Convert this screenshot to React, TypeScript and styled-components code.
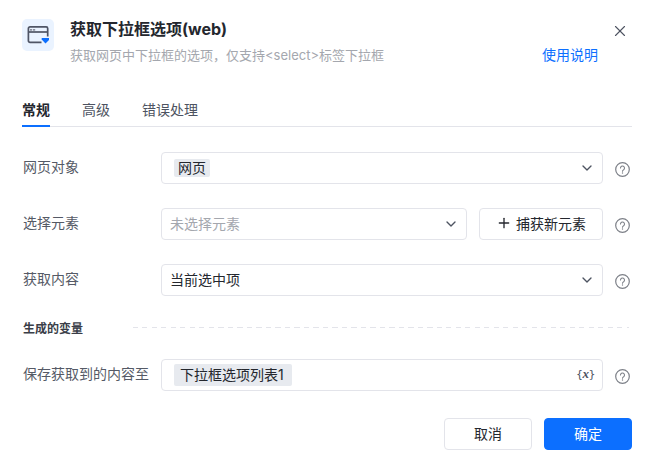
import styled, { createGlobalStyle } from "styled-components";
import { ChevronDown, Plus, X } from "lucide-react";

const GlobalStyle = createGlobalStyle`
  html, body {
    margin: 0;
    background: #fff;
  }
  body {
    font-family: Inter, "Noto Sans CJK SC", "Noto Sans", sans-serif;
    color: #24272e;
  }
`;

const Dialog = styled.div`
  width: 649px;
  height: 465px;
  box-sizing: border-box;
  padding: 19px 17px 0 22px;
  display: flex;
  flex-direction: column;
`;

const Header = styled.div`
  display: flex;
  height: 49px;
`;

const LogoBox = styled.div`
  width: 32px;
  height: 32px;
  border-radius: 5px;
  background: #eaf3ff;
  display: flex;
  align-items: center;
  justify-content: center;
  margin-right: 16px;
  flex: none;
`;

const HeaderText = styled.div`
  flex: 1;
`;

const Title = styled.div`
  font-size: 16px;
  line-height: 20px;
  font-weight: 700;
  color: #24272e;
`;

const SubRow = styled.div`
  display: flex;
  justify-content: space-between;
  margin-top: 6px;
  padding-right: 34px;
`;

const Subtitle = styled.div`
  font-size: 13px;
  line-height: 20px;
  color: #a4a7ae;
`;

const HelpLink = styled.a`
  font-size: 14px;
  line-height: 20px;
  color: #0c6fff;
  text-decoration: none;
`;

const CloseButton = styled.div`
  position: absolute;
  top: 22px;
  left: 611px;
  color: #4d5361;
  display: flex;
`;

const Tabs = styled.div`
  display: flex;
  gap: 32px;
  margin-top: 32px;
  border-bottom: 1px solid #e3e4ea;
  height: 26px;
`;

const Tab = styled.div<{ $active?: boolean }>`
  font-size: 14px;
  line-height: 20px;
  height: 25px;
  font-weight: ${({ $active }) => ($active ? 700 : 400)};
  color: ${({ $active }) => ($active ? "#24272e" : "#4d5361")};
  border-bottom: 2px solid ${({ $active }) => ($active ? "#0c6fff" : "transparent")};
`;

const Form = styled.div`
  display: flex;
  flex-direction: column;
  gap: 24px;
  margin-top: 25px;
`;

const Row = styled.div`
  display: flex;
  align-items: center;
  height: 32px;
`;

const Label = styled.div`
  width: 138px;
  margin-left: 1px;
  flex: none;
  font-size: 14px;
  color: #555a66;
  margin-top: -5px;
  white-space: nowrap;
`;

const Field = styled.div`
  flex: 1;
  min-width: 0;
  height: 32px;
  box-sizing: border-box;
  border: 1px solid #e3e4ea;
  border-radius: 4px;
  display: flex;
  align-items: center;
  justify-content: space-between;
  padding: 0 7px 0 12px;
  font-size: 14px;
  color: #24272e;
`;

const Placeholder = styled.span`
  color: #a4a7ae;
  margin: 0 0 2px -4px;
`;

const Value = styled.span`
  color: #24272e;
  margin: 0 0 2px -4px;
`;

const Tag = styled.span<{ $large?: boolean }>`
  background: #e7eaef;
  border-radius: 2px;
  padding: ${({ $large }) => ($large ? "0 8px 0 6px" : "0 4px")};
  line-height: ${({ $large }) => ($large ? "22px" : "18px")};
  font-size: 14px;
  color: #24272e;
`;

const Chevron = styled(ChevronDown)`
  color: #4d5361;
  flex: none;
`;

const CaptureButton = styled.div`
  width: 124px;
  height: 32px;
  box-sizing: border-box;
  margin-left: 12px;
  padding-bottom: 2px;
  flex: none;
  border: 1px solid #e3e4ea;
  border-radius: 4px;
  display: flex;
  align-items: center;
  justify-content: center;
  gap: 4px;
  font-size: 14px;
  color: #24272e;
`;

const HelpSlot = styled.div`
  width: 29px;
  flex: none;
  display: flex;
  justify-content: flex-end;
  padding-right: 2px;
  box-sizing: border-box;
  margin-top: 2px;
`;

const SectionRow = styled.div`
  display: flex;
  align-items: center;
  height: 15px;
`;

const SectionTitle = styled.div`
  font-size: 12px;
  font-weight: 700;
  color: #3a3e48;
  margin-left: 1px;
  width: 110px;
  flex: none;
`;

const DashedLine = styled.div`
  flex: 1;
  height: 1px;
  margin-right: 3px;
  background: repeating-linear-gradient(to right, #e3e4ea 0 5px, transparent 5px 9.5px);
`;

const VarIcon = styled.span`
  font-family: "DejaVu Sans", sans-serif;
  font-size: 11px;
  color: #4d5361;
  letter-spacing: -0.5px;
  margin-bottom: 2px;
`;

const VarName = styled.i`
  font-family: "Liberation Serif", serif;
  font-size: 13px;
  font-weight: 700;
`;

const Footer = styled.div`
  display: flex;
  justify-content: flex-end;
  gap: 12px;
  margin-top: 27px;
`;

const Button = styled.div<{ $primary?: boolean }>`
  width: 88px;
  height: 32px;
  box-sizing: border-box;
  padding-bottom: 2px;
  border-radius: 4px;
  display: flex;
  align-items: center;
  justify-content: center;
  font-size: 14px;
  color: ${({ $primary }) => ($primary ? "#fff" : "#24272e")};
  background: ${({ $primary }) => ($primary ? "#0c6fff" : "#fff")};
  border: 1px solid ${({ $primary }) => ($primary ? "#0c6fff" : "#e3e4ea")};
`;

const Help = () => (
  <HelpSlot>
    <svg width="15" height="15" viewBox="0 0 15 15" fill="none">
      <circle cx="7.5" cy="7.5" r="6.8" stroke="#7d8088" strokeWidth="1.2" />
      <path
        d="M5.5 6a2 2 0 1 1 3.1 1.7c-.7.4-1.1.8-1.1 1.6"
        stroke="#7d8088"
        strokeWidth="1.1"
        strokeLinecap="round"
      />
      <circle cx="7.5" cy="11" r=".7" fill="#7d8088" />
    </svg>
  </HelpSlot>
);

const App = () => {
  return (
    <Dialog>
      <GlobalStyle />
      <Header>
        <LogoBox>
          <svg width="22" height="20" viewBox="0 0 22 20" fill="none">
            <path
              d="M14.5 17.3H3a1.6 1.6 0 0 1-1.6-1.6V3.4A1.6 1.6 0 0 1 3 1.8h16.1a1.6 1.6 0 0 1 1.6 1.6v8"
              stroke="#4f5565"
              strokeWidth="1.7"
            />
            <path d="M1.4 7h19.3" stroke="#4f5565" strokeWidth="1.7" />
            <rect x="3" y="4" width="2.2" height="1.7" fill="#8a8f9c" />
            <rect x="6" y="4" width="2.2" height="1.7" fill="#8a8f9c" />
            <path d="M14.7 13h7.6v1.6l-3.8 4-3.8-4z" fill="#0c6fff" />
          </svg>
        </LogoBox>
        <HeaderText>
          <Title>获取下拉框选项(web)</Title>
          <SubRow>
            <Subtitle>获取网页中下拉框的选项，仅支持&lt;select&gt;标签下拉框</Subtitle>
            <HelpLink>使用说明</HelpLink>
          </SubRow>
        </HeaderText>
        <CloseButton>
          <X size={18} strokeWidth={1.5} />
        </CloseButton>
      </Header>

      <Tabs>
        <Tab $active>常规</Tab>
        <Tab>高级</Tab>
        <Tab>错误处理</Tab>
      </Tabs>

      <Form>
        <Row>
          <Label>网页对象</Label>
          <Field>
            <Tag>网页</Tag>
            <Chevron size={16} />
          </Field>
          <Help />
        </Row>
        <Row>
          <Label>选择元素</Label>
          <Field>
            <Placeholder>未选择元素</Placeholder>
            <Chevron size={16} />
          </Field>
          <CaptureButton>
            <Plus size={16} />
            捕获新元素
          </CaptureButton>
          <Help />
        </Row>
        <Row>
          <Label>获取内容</Label>
          <Field>
            <Value>当前选中项</Value>
            <Chevron size={16} />
          </Field>
          <Help />
        </Row>
        <SectionRow>
          <SectionTitle>生成的变量</SectionTitle>
          <DashedLine />
        </SectionRow>
        <Row>
          <Label>保存获取到的内容至</Label>
          <Field>
            <Tag $large>下拉框选项列表1</Tag>
            <VarIcon>
              {"{"}
              <VarName>x</VarName>
              {"}"}
            </VarIcon>
          </Field>
          <Help />
        </Row>
      </Form>

      <Footer>
        <Button>取消</Button>
        <Button $primary>确定</Button>
      </Footer>
    </Dialog>
  );
};

export default App;
